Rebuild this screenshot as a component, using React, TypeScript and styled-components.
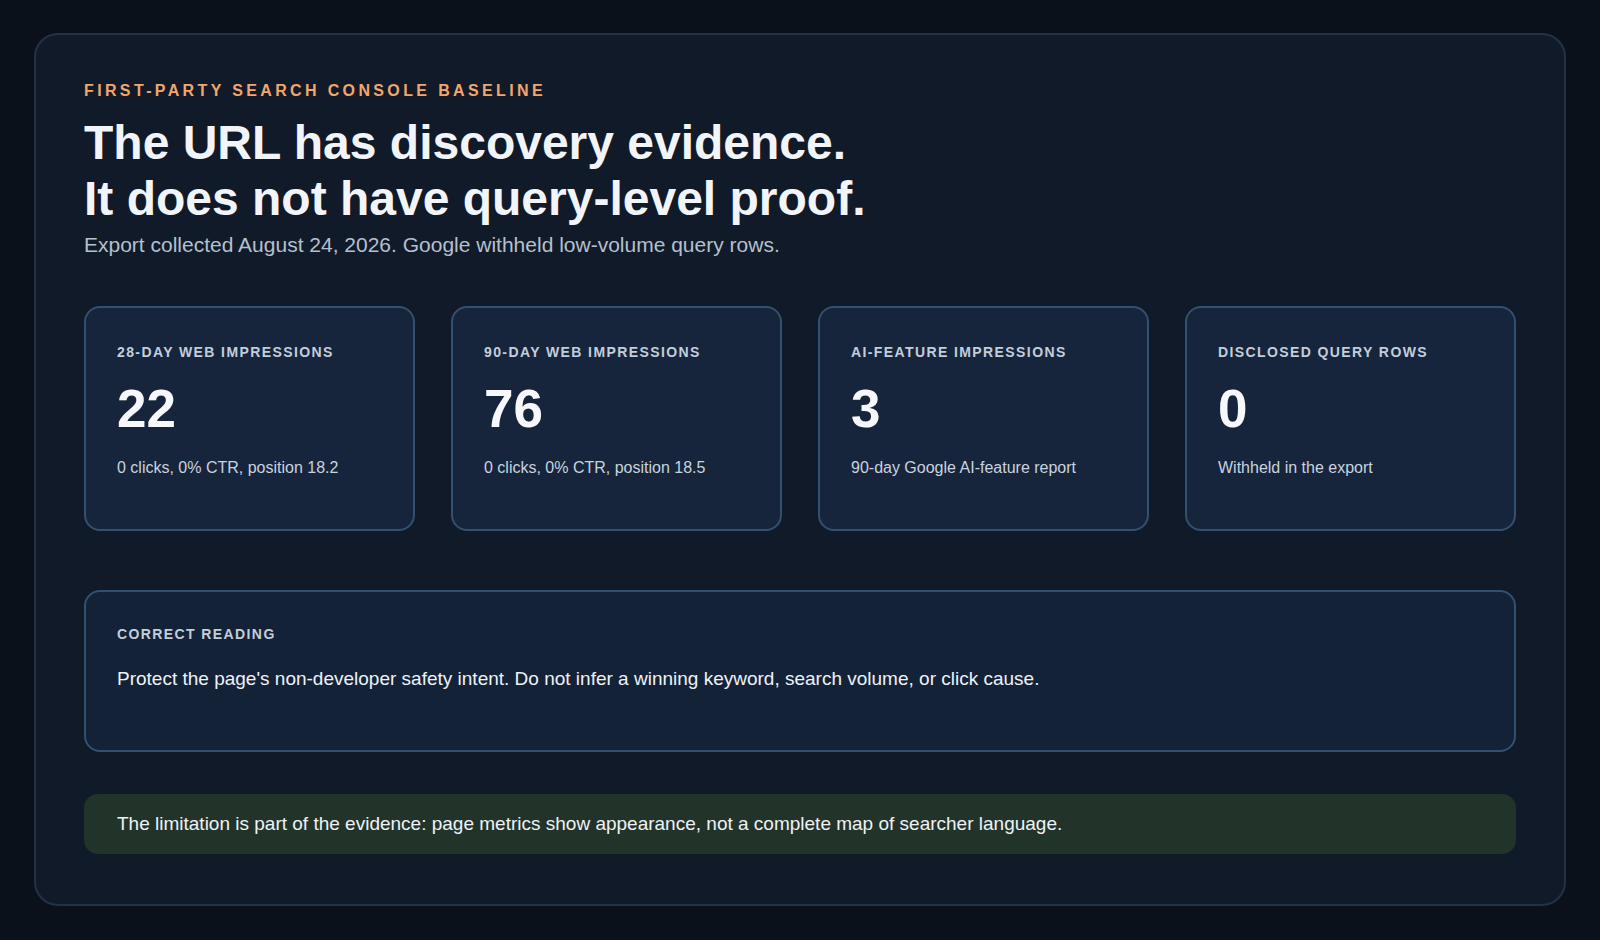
import styled, { createGlobalStyle } from 'styled-components'

const GlobalStyle = createGlobalStyle`
  html, body {
    margin: 0;
    background: #0b111a;
    font-family: "Liberation Sans", Arial, sans-serif;
  }
`

interface Metric {
  label: string
  value: string
  note: string
}

const metrics: Metric[] = [
  { label: '28-day web impressions', value: '22', note: '0 clicks, 0% CTR, position 18.2' },
  { label: '90-day web impressions', value: '76', note: '0 clicks, 0% CTR, position 18.5' },
  { label: 'AI-feature impressions', value: '3', note: '90-day Google AI-feature report' },
  { label: 'Disclosed query rows', value: '0', note: 'Withheld in the export' },
]

const App = () => (
  <>
    <GlobalStyle />
    <Page>
      <Panel>
        <Eyebrow>First-party Search Console baseline</Eyebrow>
        <Title>
          The URL has discovery evidence.
          <br />
          It does not have query-level proof.
        </Title>
        <Subtitle>Export collected August 24, 2026. Google withheld low-volume query rows.</Subtitle>
        <CardGrid>
          {metrics.map((m) => (
            <Card key={m.label}>
              <CardLabel>{m.label}</CardLabel>
              <CardValue>{m.value}</CardValue>
              <CardNote>{m.note}</CardNote>
            </Card>
          ))}
        </CardGrid>
        <Reading>
          <CardLabel>Correct reading</CardLabel>
          <ReadingText>
            Protect the page's non-developer safety intent. Do not infer a winning keyword, search volume, or click cause.
          </ReadingText>
        </Reading>
        <Note>
          The limitation is part of the evidence: page metrics show appearance, not a complete map of searcher language.
        </Note>
      </Panel>
    </Page>
  </>
)

const Page = styled.div`
  box-sizing: border-box;
  height: 940px;
  padding: 33px 34px 34px;
`

const Panel = styled.div`
  box-sizing: border-box;
  height: 100%;
  background: #111a28;
  border: 2px solid #243247;
  border-radius: 24px;
  padding: 46px 48px 0;
`

const Eyebrow = styled.div`
  color: #f3a66b;
  font-size: 16px;
  font-weight: 700;
  letter-spacing: 0.21em;
  text-transform: uppercase;
  line-height: 20px;
`

const Title = styled.h1`
  margin: 14px 0 0;
  color: #f1f5f9;
  font-size: 48px;
  font-weight: 700;
  line-height: 56px;
`

const Subtitle = styled.p`
  margin: 4px 0 0;
  color: #b4c0cf;
  font-size: 21px;
  line-height: 28px;
`

const CardGrid = styled.div`
  display: grid;
  grid-template-columns: repeat(4, 1fr);
  gap: 36px;
  margin-top: 47px;
`

const Card = styled.div`
  box-sizing: border-box;
  height: 225px;
  background: #17253c;
  border: 2px solid #33506f;
  border-radius: 16px;
  padding: 35px 31px;
`

const CardLabel = styled.div`
  color: #c3cedb;
  font-size: 14px;
  font-weight: 700;
  letter-spacing: 0.1em;
  text-transform: uppercase;
  line-height: 18px;
`

const CardValue = styled.div`
  margin-top: 18px;
  color: #f6f8fb;
  font-size: 53px;
  font-weight: 700;
  line-height: 60px;
`

const CardNote = styled.div`
  margin-top: 18px;
  color: #c9d3df;
  font-size: 16px;
  line-height: 22px;
`

const Reading = styled.div`
  box-sizing: border-box;
  height: 162px;
  margin-top: 59px;
  background: #142238;
  border: 2px solid #33506f;
  border-radius: 16px;
  padding: 33px 31px;
`

const ReadingText = styled.div`
  margin-top: 24px;
  color: #eef2f7;
  font-size: 19px;
  line-height: 24px;
`

const Note = styled.div`
  box-sizing: border-box;
  height: 60px;
  margin-top: 42px;
  background: #22342a;
  border-radius: 14px;
  padding: 0 33px;
  display: flex;
  align-items: center;
  color: #eef2f7;
  font-size: 19px;
`

export default App
